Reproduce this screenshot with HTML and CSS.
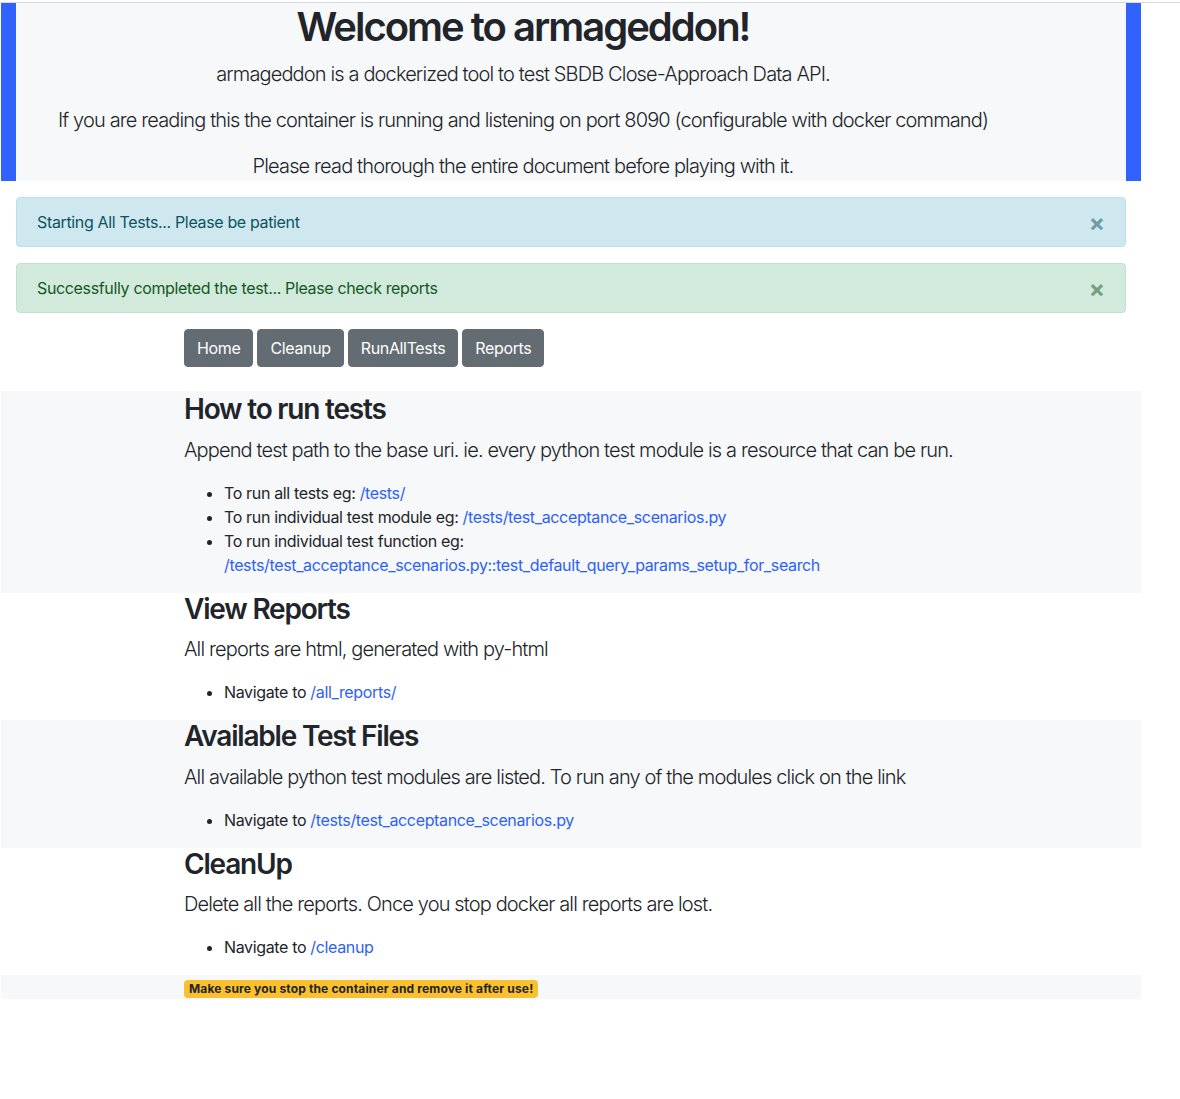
FILE: index.html
```html
<!DOCTYPE html>
<html>
<head>
<meta charset="utf-8">
<title>armageddon</title>
<link rel="stylesheet" href="styles.css">
</head>
<body>
<div class="topline"></div>
<div class="page">
  <div class="hero">
    <h1 class="hero-title">Welcome to armageddon!</h1>
    <p class="lead">armageddon is a dockerized tool to test SBDB Close-Approach Data API.</p>
    <p class="lead">If you are reading this the container is running and listening on port 8090 (configurable with docker command)</p>
    <p class="lead last">Please read thorough the entire document before playing with it.</p>
  </div>

  <div class="alerts">
    <div class="alert alert-info">Starting All Tests... Please be patient<span class="close">&times;</span></div>
    <div class="alert alert-success">Successfully completed the test... Please check reports<span class="close">&times;</span></div>
  </div>

  <div class="nav">
    <a class="btn">Home</a>
    <a class="btn">Cleanup</a>
    <a class="btn">RunAllTests</a>
    <a class="btn">Reports</a>
  </div>

  <section class="band gray first">
    <div class="col">
      <h3>How to run tests</h3>
      <p class="lead">Append test path to the base uri. ie. every python test module is a resource that can be run.</p>
      <ul>
        <li>To run all tests eg: <a class="link">/tests/</a></li>
        <li>To run individual test module eg: <a class="link">/tests/test_acceptance_scenarios.py</a></li>
        <li>To run individual test function eg: <a class="link">/tests/test_acceptance_scenarios.py::test_default_query_params_setup_for_search</a></li>
      </ul>
    </div>
  </section>

  <section class="band">
    <div class="col">
      <h3>View Reports</h3>
      <p class="lead">All reports are html, generated with py-html</p>
      <ul>
        <li>Navigate to <a class="link">/all_reports/</a></li>
      </ul>
    </div>
  </section>

  <section class="band gray">
    <div class="col">
      <h3>Available Test Files</h3>
      <p class="lead">All available python test modules are listed. To run any of the modules click on the link</p>
      <ul>
        <li>Navigate to <a class="link">/tests/test_acceptance_scenarios.py</a></li>
      </ul>
    </div>
  </section>

  <section class="band">
    <div class="col">
      <h3>CleanUp</h3>
      <p class="lead">Delete all the reports. Once you stop docker all reports are lost.</p>
      <ul>
        <li>Navigate to <a class="link">/cleanup</a></li>
      </ul>
    </div>
  </section>

  <div class="band gray strip">
    <div class="col"><span class="badge">Make sure you stop the container and remove it after use!</span></div>
  </div>
</div>
</body>
</html>
```

FILE: styles.css
```css
html, body {
  margin: 0;
  padding: 0;
  background: #ffffff;
}
body {
  font-family: Inter, "Noto Sans", "Liberation Sans", sans-serif;
  font-size: 16px;
  line-height: 1.5;
  color: #212529;
  letter-spacing: -0.35px;
}
.topline {
  height: 2px;
  border-bottom: 1px solid #d9dadc;
}
.page {
  width: 1140px;
  margin-left: 1px;
}
.hero {
  background: #f7f8fa;
  border-left: 15px solid #3162fe;
  border-right: 15px solid #3162fe;
  padding-right: 96px;
  text-align: center;
  margin-bottom: 16px;
}
.hero-title {
  margin: 0 0 8px 0;
  font-size: 40px;
  line-height: 1.2;
  font-weight: 600;
  letter-spacing: -2px;
}
.lead {
  font-size: 20px;
  font-weight: 300;
  line-height: 30px;
  margin: 0 0 16px 0;
  letter-spacing: -0.86px;
}
.hero .last {
  margin-bottom: 0;
}
.alerts {
  padding: 0 15px;
}
.alert {
  position: relative;
  padding: 12px 64px 12px 20px;
  border: 1px solid transparent;
  border-radius: 4px;
  margin-bottom: 16px;
  line-height: 24px;
}
.alert-info {
  background: #cfe8ef;
  border-color: #bde0e8;
  color: #0c5460;
}
.alert-success {
  background: #d1eadb;
  border-color: #c0e2c8;
  color: #155724;
}
.close {
  position: absolute;
  top: 0;
  right: 0;
  padding: 12px 20px;
  font-size: 24px;
  font-weight: 700;
  line-height: 1;
  opacity: 0.5;
  margin-top: 1px;
  letter-spacing: 0;
}
.nav {
  padding-left: 183px;
  margin-bottom: 24px;
  display: flex;
  gap: 4px;
}
.btn {
  display: inline-block;
  background: #636b73;
  color: #ffffff;
  border: 1px solid #636b73;
  border-radius: 4px;
  padding: 6px 12px;
  line-height: 24px;
  font-size: 16px;
}
.band {
  display: flow-root;
}
.band.gray {
  background: #f7f8fa;
}
.band.first {
  padding-top: 2px;
}
.col {
  margin-left: 183px;
  width: 785px;
}
h3 {
  margin: 0 0 8px 0;
  font-size: 28px;
  line-height: 1.2;
  font-weight: 600;
  letter-spacing: -1.2px;
}
ul {
  margin: 0 0 16px 0;
  padding-left: 40px;
}
li {
  line-height: 24px;
}
.link {
  color: #2c62f6;
}
.strip {
  height: 24px;
  line-height: 24px;
}
.badge {
  display: inline-block;
  background: #fbc02d;
  color: #212529;
  font-size: 12px;
  font-weight: 700;
  line-height: 1;
  padding: 3px 5px;
  border-radius: 4px;
  vertical-align: middle;
  letter-spacing: 0.15px;
}
```
